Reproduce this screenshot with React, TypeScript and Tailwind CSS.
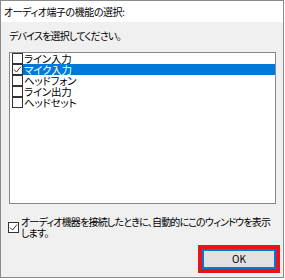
import React from 'react'

/* オーディオ端子の機能の選択 ダイアログ */

const DEVICES = ['ライン入力', 'マイク入力', 'ヘッドフォン', 'ライン出力', 'ヘッドセット']
const SELECTED = 1

const font = "font-['Meiryo_UI','Noto_Sans_CJK_JP',sans-serif] [font-feature-settings:'palt']"

function Check({ checked }: { checked: boolean }) {
  return (
    <div className="w-[11px] h-[11px] border border-[#333333] bg-white flex items-center justify-center shrink-0">
      {checked && (
        <svg width="9" height="9" viewBox="0 0 9 9">
          <path d="M1 4.5 L3.5 7 L8 1.5" fill="none" stroke="#333333" strokeWidth="1" />
        </svg>
      )}
    </div>
  )
}

export default function App() {
  return (
    <div className={`w-[284px] h-[278px] border border-[#8a8a8a] bg-[#f0f0f0] flex flex-col text-[10px] tracking-[-0.8px] text-black ${font}`}>
      {/* title */}
      <div className="h-[21px] shrink-0 bg-white flex items-center pl-[3px] leading-[14px] tracking-[-0.45px]">オーディオ端子の機能の選択:</div>

      <div className="flex-1 flex flex-col px-[8px]">
        <div className="mt-[8px] h-[12px] leading-[12px] shrink-0">デバイスを選択してください。</div>

        {/* list */}
        <div className="mt-[10px] h-[152px] w-[267px] shrink-0 border border-[#828790] bg-white pl-[2px] text-[10.5px] tracking-[-0.2px]">
          {DEVICES.map((d, i) => (
            <div
              key={d}
              className={`h-[11px] flex items-center leading-[11px] ${i === SELECTED ? 'bg-[#0078d7] text-white' : ''}`}
            >
              <Check checked={i === SELECTED} />
              <span className="ml-px">{d}</span>
            </div>
          ))}
        </div>

        {/* auto show */}
        <div className="mt-[12px] flex items-start -ml-px shrink-0">
          <div className="mt-[6px]">
            <Check checked />
          </div>
          <div className="ml-[2px] leading-[11px] whitespace-nowrap">
            オーディオ機器を接続したときに、自動的にこのウィンドウを表示
            <br />
            します。
          </div>
        </div>

        {/* button */}
        <div className="mt-[7px] flex justify-end -mr-[5px] shrink-0">
          <div className="border-[4px] border-[#e8141c]">
            <button className="w-[74px] h-[20px] bg-[#e1e1e1] border-2 border-[#0078d7] flex items-center justify-center leading-none tracking-normal">
              OK
            </button>
          </div>
        </div>
      </div>
    </div>
  )
}
